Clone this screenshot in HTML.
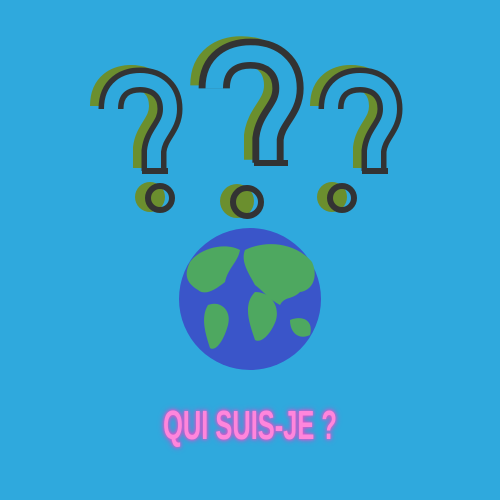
<!DOCTYPE html><html><head><style>
body{margin:0;width:500px;height:500px;background:#2fa9dd;overflow:hidden;position:relative}
.t{position:absolute;left:0;width:500px;top:402px;text-align:center;font-family:"Liberation Sans",sans-serif;font-weight:bold;font-size:41px;color:#ff86dc;transform:scaleX(0.62);text-shadow:0 0 4px #ff4fd0,0 0 8px #e040c0}
</style></head><body>
<svg width="500" height="500" style="position:absolute;left:0;top:0">
<defs>
<path id="q" d="M13,42 C13,20 28,13 42,13 C60,13 72,24 72,42 C72,60 58,66 56,84 L56,104"/>
</defs>
<g fill="none" stroke="#6b8f2e" stroke-width="24" transform="translate(-9,-3)">
<use href="#q" transform="translate(98,67)"/><use href="#q" transform="translate(198,38) scale(1.25,1.2)"/><use href="#q" transform="translate(318,67)"/>
</g>
<g fill="#6b8f2e"><circle cx="150" cy="197" r="15"/><circle cx="237" cy="201" r="17"/><circle cx="332" cy="197" r="15"/></g>
<g fill="none" stroke="#333" stroke-width="25">
<use href="#q" transform="translate(98,67)"/><use href="#q" transform="translate(198,38) scale(1.25,1.2)"/><use href="#q" transform="translate(318,67)"/>
</g>
<g fill="none" stroke="#2fa9dd" stroke-width="14">
<use href="#q" transform="translate(98,67)"/><use href="#q" transform="translate(198,38) scale(1.25,1.2)"/><use href="#q" transform="translate(318,67)"/>
</g>
<g fill="none" stroke="#333" stroke-width="6">
<path d="M142,171 h26 M254,163 h34 M362,171 h26"/>
</g>
<g fill="none" stroke="#333" stroke-width="6"><circle cx="160" cy="198" r="12"/><circle cx="247" cy="202" r="14"/><circle cx="342" cy="198" r="12"/></g>
<circle cx="250" cy="299" r="71" fill="#3a55c9"/>
<g fill="#4ea860">
<path d="M190,262 C200,248 225,242 240,250 C238,262 228,268 225,282 C215,290 205,296 198,290 C190,285 182,278 190,262Z"/>
<path d="M208,305 C220,300 232,310 228,325 C224,340 216,352 210,348 C206,335 200,318 208,305Z"/>
<path d="M245,250 C265,240 295,242 312,262 C318,275 314,290 300,292 C292,300 285,296 280,305 C270,300 262,290 255,285 C250,275 240,262 245,250Z"/>
<path d="M255,292 C270,292 280,305 276,320 C272,332 262,344 255,340 C250,325 242,305 255,292Z"/>
<path d="M290,320 C302,315 314,320 310,335 C300,340 290,334 290,320Z"/>
</g>
</svg>
<div class="t">QUI SUIS-JE ?</div>
</body></html>
